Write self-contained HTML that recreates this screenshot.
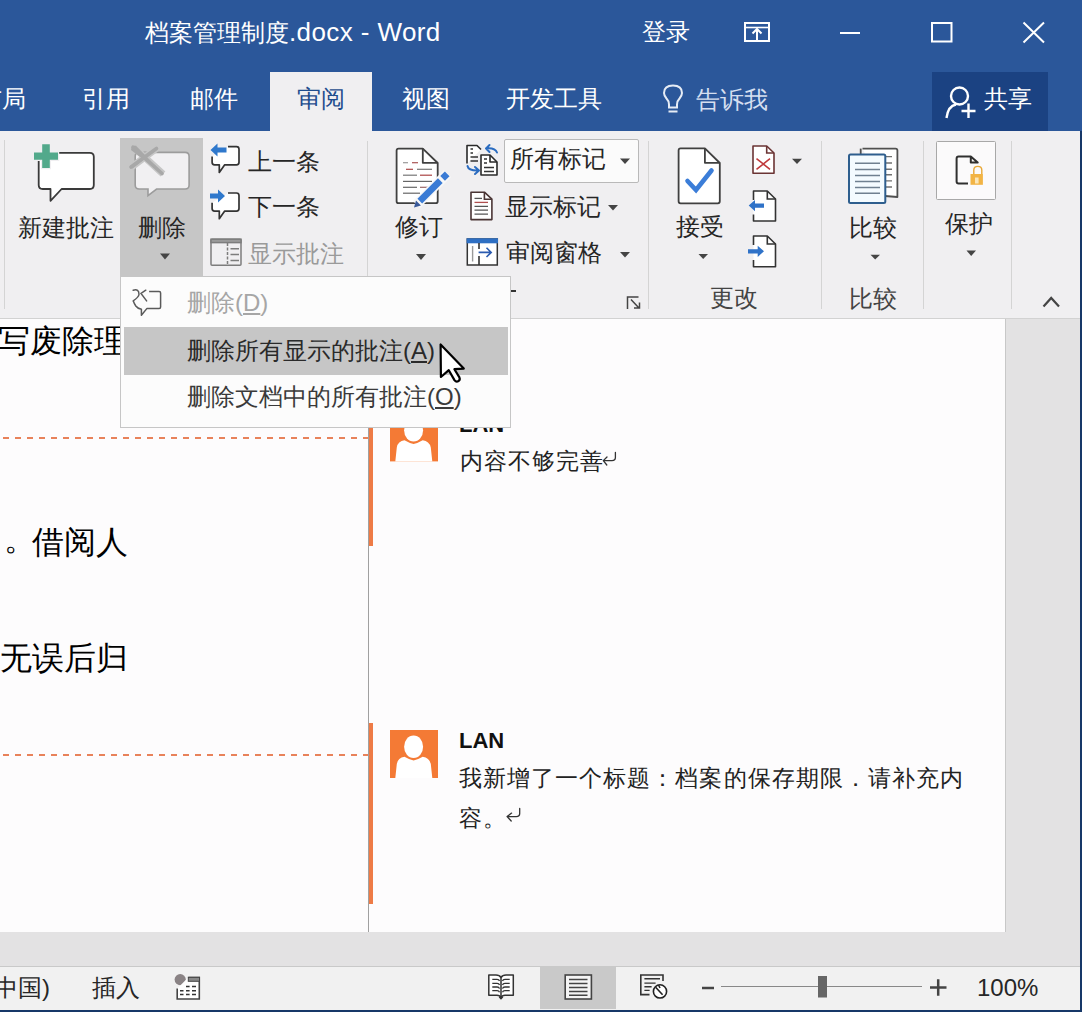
<!DOCTYPE html>
<html><head><meta charset="utf-8">
<style>
*{margin:0;padding:0;box-sizing:border-box}
html,body{width:1082px;height:1012px;overflow:hidden;background:#fdfcfd}
body{position:relative;font-family:"Liberation Sans",sans-serif;color:#262626;font-weight:500}
.a{position:absolute}
.t{position:absolute;white-space:nowrap;line-height:1}
.w{color:#fff}
svg{position:absolute;overflow:visible}
.k{display:inline-block;width:1em;text-align:center;font-style:normal}
#c1 .k,#c3 .k{width:24.1px}
#c2 .k{width:24.05px}
</style></head><body>

<!-- title + tabs -->
<div class="a" style="left:0;top:0;width:1082px;height:131px;background:#2b579a"></div>
<div class="t w" id="title" style="left:145px;top:19px;font-size:24px"><i class="k">档</i><i class="k">案</i><i class="k">管</i><i class="k">理</i><i class="k">制</i><i class="k">度</i><span style="font-size:26px;letter-spacing:0.4px">.docx - Word</span></div>
<div class="t w" id="login" style="left:642px;top:20px;font-size:24px"><i class="k">登</i><i class="k">录</i></div>

<!-- tabs -->
<div class="t w" id="tab0" style="left:-22px;top:87px;font-size:24px"><i class="k">布</i><i class="k">局</i></div>
<div class="t w" id="tab1" style="left:82px;top:87px;font-size:24px"><i class="k">引</i><i class="k">用</i></div>
<div class="t w" id="tab2" style="left:190px;top:87px;font-size:24px"><i class="k">邮</i><i class="k">件</i></div>
<div class="a" style="left:270px;top:72px;width:102px;height:60px;background:#f0eff1"></div>
<div class="t" id="tab3" style="left:297px;top:87px;font-size:24px;color:#1f4d8e"><i class="k">审</i><i class="k">阅</i></div>
<div class="t w" id="tab4" style="left:402px;top:87px;font-size:24px"><i class="k">视</i><i class="k">图</i></div>
<div class="t w" id="tab5" style="left:506px;top:87px;font-size:24px"><i class="k">开</i><i class="k">发</i><i class="k">工</i><i class="k">具</i></div>
<div class="t" id="tab6" style="left:696px;top:88px;font-size:24px;color:#d5dff0"><i class="k">告</i><i class="k">诉</i><i class="k">我</i></div>
<div class="a" style="left:932px;top:72px;width:116px;height:59px;background:#1b4282"></div>
<div class="t w" id="share" style="left:984px;top:87px;font-size:24px"><i class="k">共</i><i class="k">享</i></div>


<svg style="left:0;top:0" width="1082" height="131">
 <g fill="none" stroke="#fff" stroke-width="2">
  <rect x="745" y="23" width="24" height="18"/>
  <line x1="745" y1="27.5" x2="769" y2="27.5" stroke-width="1.6"/>
  <path d="M757 40V29M752.5 33.5L757 29L761.5 33.5"/>
  <line x1="840" y1="33" x2="860" y2="33"/>
  <rect x="932" y="23" width="19.5" height="18.5"/>
  <path d="M1023.5 22.5L1044 42.5M1044 22.5L1023.5 42.5"/>
 </g>
 <g fill="none" stroke="#e6ecf5" stroke-width="2">
  <path d="M669 107.5V104.5Q669 101 666.5 98.5Q664 95.5 664 93Q664 85.5 673 85.5Q682 85.5 682 93Q682 95.5 679.5 98.5Q677 101 677 104.5V107.5Z"/>
  <line x1="668.5" y1="111.5" x2="677.5" y2="111.5"/>
 </g>
 <g fill="none" stroke="#fff" stroke-width="2.4">
  <circle cx="959.5" cy="96" r="8.5"/>
  <path d="M946.5 118Q948 106 956 104.5"/>
  <path d="M968.5 103.5V118M961.5 111H975.5"/>
 </g>
</svg>

<!-- ribbon -->
<div class="a" style="left:0;top:131px;width:1082px;height:188px;background:#f0eff1;border-bottom:1px solid #d2d2d2"></div>
<div class="a" style="left:120px;top:138px;width:83px;height:139px;background:#c6c6c6"></div>
<div class="t" id="r_new" style="left:18px;top:215.5px;font-size:24px"><i class="k">新</i><i class="k">建</i><i class="k">批</i><i class="k">注</i></div>
<div class="t" id="r_del" style="left:138px;top:215.5px;font-size:24px"><i class="k">删</i><i class="k">除</i></div>
<div class="t" id="r_prev" style="left:248px;top:150px;font-size:24px"><i class="k">上</i><i class="k">一</i><i class="k">条</i></div>
<div class="t" id="r_next" style="left:248px;top:195px;font-size:24px"><i class="k">下</i><i class="k">一</i><i class="k">条</i></div>
<div class="t" id="r_show" style="left:248px;top:241.5px;font-size:24px;color:#9a9a9a"><i class="k">显</i><i class="k">示</i><i class="k">批</i><i class="k">注</i></div>
<div class="t" id="r_rev" style="left:395px;top:215px;font-size:24px"><i class="k">修</i><i class="k">订</i></div>
<div class="a" style="left:504px;top:139px;width:135px;height:44px;background:#fbfbfb;border:1px solid #b9b9b9;border-radius:2px"></div>
<div class="t" id="r_all" style="left:510px;top:146.5px;font-size:24px"><i class="k">所</i><i class="k">有</i><i class="k">标</i><i class="k">记</i></div>
<div class="t" id="r_showm" style="left:505px;top:194.5px;font-size:24px"><i class="k">显</i><i class="k">示</i><i class="k">标</i><i class="k">记</i></div>
<div class="t" id="r_pane" style="left:506px;top:241px;font-size:24px"><i class="k">审</i><i class="k">阅</i><i class="k">窗</i><i class="k">格</i></div>
<div class="t" id="r_acc" style="left:676px;top:215px;font-size:24px"><i class="k">接</i><i class="k">受</i></div>
<div class="t" id="r_chg" style="left:710px;top:286px;font-size:24px;color:#444"><i class="k">更</i><i class="k">改</i></div>
<div class="t" id="r_cmp" style="left:849px;top:215.5px;font-size:24px"><i class="k">比</i><i class="k">较</i></div>
<div class="t" id="r_cmpl" style="left:849px;top:287px;font-size:24px;color:#444"><i class="k">比</i><i class="k">较</i></div>
<div class="a" style="left:936px;top:141px;width:60px;height:59px;background:#fbfafb;border:1px solid #a8a8a8;border-radius:1.5px"></div>
<div class="t" id="r_prot" style="left:945px;top:212px;font-size:24px"><i class="k">保</i><i class="k">护</i></div>


<svg style="left:0;top:0" width="1082" height="320">
 <!-- new comment -->
 <path d="M42.7 152.8H89.8Q93.8 152.8 93.8 156.8V185Q93.8 189 89.8 189H61.6L50.5 200.8V189H42.7Q38.7 189 38.7 185V156.8Q38.7 152.8 42.7 152.8Z" fill="#fff" stroke="#3a3a3a" stroke-width="1.8" stroke-linejoin="round"/>
 <path d="M42.2 144.3H49.8V152.4H58V159.8H49.8V168H42.2V159.8H34V152.4H42.2Z" fill="#52a98b" stroke="#f0eff1" stroke-width="2.4" paint-order="stroke"/>
 <!-- delete -->
 <path d="M139.2 152.4H185.1Q189.1 152.4 189.1 156.4V185Q189.1 189 185.1 189H156.6L148 195.7V189H139.2Q135.2 189 135.2 185V156.4Q135.2 152.4 139.2 152.4Z" fill="#f1f0f2" stroke="#9c9c9c" stroke-width="1.6"/>
 <path d="M133 146.5L163 174M157 148L131 167.5" stroke="#c6c6c6" stroke-width="7" fill="none"/>
 <path d="M132 145.5L136 145.8L164 174.5L160.5 172.5L131 150Z" fill="#a8a8a8"/>
 <path d="M157.5 147.5L155 151L132.5 168.5L130 168Q129.5 166.5 131 165.5Z" fill="#a8a8a8"/>
 <path d="M133 147.5L162 173.5M156.5 148.5L131 167" stroke="#a8a8a8" stroke-width="3.6" fill="none" stroke-linecap="round"/>
 <!-- prev / next comment -->
 <g fill="#fff" stroke="#333" stroke-width="1.7" stroke-linejoin="round">
  <path d="M228 146.7H236.5Q239 146.7 239 149.2V162.3Q239 164.8 236.5 164.8H224.7L219.3 172.4V164.8H214.6Q212.1 164.8 212.1 162.3V156.4"/>
  <path d="M228 193H236.5Q239 193 239 195.5V208.6Q239 211.1 236.5 211.1H224.7L219.3 218.7V211.1H214.6Q212.1 211.1 212.1 208.6V202.7"/>
 </g>
 <g fill="#2f78cc">
  <path d="M210.5 150L217.5 143.6V147.5H226.5V152.5H217.5V156.4Z"/>
  <path d="M225 196L218 189.6V193.5H210V198.5H218V202.4Z"/>
 </g>
 <!-- show comments -->
 <g fill="none" stroke="#7d7d7d" stroke-width="1.5">
  <rect x="211" y="239.2" width="30" height="26" rx="1"/>
  <rect x="211" y="239.2" width="30" height="3.4" fill="#9a9a9a"/>
  <line x1="227.5" y1="243" x2="227.5" y2="265" stroke-dasharray="3 1.5"/>
  <path d="M230.5 248.8H239M230.5 254.5H239M230.5 260.5H239" stroke-width="1.4"/>
 </g>
 <!-- track changes -->
 <path d="M398.6 148.6H422.8L437.7 163V201.2Q437.7 203.2 435.7 203.2H398.6Q396.6 203.2 396.6 201.2V150.6Q396.6 148.6 398.6 148.6Z" fill="#fff" stroke="#404040" stroke-width="1.8" stroke-linejoin="round"/>
 <path d="M422.8 148.6V162.8H437.7" fill="none" stroke="#404040" stroke-width="1.8" stroke-linejoin="round"/>
 <g stroke-width="1.2">
  <path d="M403 162.7H408" stroke="#999"/><path d="M412 162.7H418" stroke="#a55"/>
  <path d="M406 169.3H413" stroke="#a44"/><path d="M417 169.3H432" stroke="#777"/>
  <path d="M403 175.2H417" stroke="#777"/><path d="M420 175.2H432" stroke="#a44"/>
  <path d="M403 181.4H432" stroke="#666"/>
  <path d="M403 187.3H417" stroke="#666"/><path d="M420 187.3H428" stroke="#966"/>
  <path d="M403 193.2H420" stroke="#666"/>
 </g>
 <path d="M416.5 204.5L447.5 173.5" stroke="#f8f8f8" stroke-width="10"/>
 <path d="M419.8 201.2L440.3 180.7" stroke="#3a7bd5" stroke-width="6.6"/>
 <path d="M442.6 178.4L447.2 173.8" stroke="#3a7bd5" stroke-width="6.6"/>
 <path d="M414 207.5L416 200.6L420.9 205.5Z" fill="#3a5a9a"/>
 <!-- tracking icon -->
 <g fill="#fff" stroke="#2a2a2a" stroke-width="1.6" stroke-linejoin="round">
  <path d="M467 163.5V145.5H477L481 149.5"/>
  <path d="M481 175V155H490L497 162V175Z"/>
  <path d="M490 155V162H497" fill="none"/>
 </g>
 <g stroke="#333" stroke-width="1.3"><path d="M470.5 149H473M470.5 153H473M470.5 157H478M470.5 161H478M484 159H487M484 163H487M484 167.5H494M484 171.5H494"/></g>
 <g fill="none" stroke="#2b6cc0" stroke-width="2" stroke-linecap="round" stroke-linejoin="round">
  <path d="M497 152.5Q495 147.5 486 148.5M489.5 145L486 148.5L489.5 152"/>
  <path d="M467.5 166Q468.5 171 479 170.5M475 167L479 170.5L475 174"/>
 </g>
 <!-- show markup -->
 <path d="M471 192.2H484.4L491.9 199.2V219.6H471Z" fill="#fff" stroke="#4a3535" stroke-width="1.6" stroke-linejoin="round"/>
 <path d="M484.4 192.2V199.2H491.9" fill="none" stroke="#4a3535" stroke-width="1.6"/>
 <g stroke-width="1.3"><path d="M474.5 198.4H482" stroke="#555"/><path d="M474.5 202.4H488" stroke="#b05050"/><path d="M474.5 206.3H488M474.5 210.2H488M474.5 214.2H488" stroke="#555"/></g>
 <!-- review pane -->
 <rect x="467.3" y="239" width="30" height="26" fill="#fff" stroke="#333" stroke-width="1.5"/>
 <rect x="466.6" y="238.3" width="31.4" height="5" fill="#2e6fc3"/>
 <path d="M479 243V249M479 256V265" stroke="#333" stroke-width="1.6"/>
 <path d="M472.6 246V261.5" stroke="#999" stroke-width="1.4"/>
 <path d="M478.6 252.4H491M486.5 247.8L491.2 252.4L486.5 257" fill="none" stroke="#2b5bb0" stroke-width="1.6"/>
 <!-- accept -->
 <path d="M680.6 148.3H704.9L719.8 163V201.3Q719.8 203.3 717.8 203.3H680.6Q678.6 203.3 678.6 201.3V150.3Q678.6 148.3 680.6 148.3Z" fill="#fff" stroke="#404040" stroke-width="1.8" stroke-linejoin="round"/>
 <path d="M704.9 148.3V162.8H719.8" fill="none" stroke="#404040" stroke-width="1.8" stroke-linejoin="round"/>
 <path d="M687.5 181L696 190L711.5 170.5" fill="none" stroke="#3b7dd8" stroke-width="4.6" stroke-linecap="round" stroke-linejoin="miter"/>
 <!-- reject -->
 <path d="M753 146H766.7L774 153V173.3H753Z" fill="#fff" stroke="#6b3434" stroke-width="1.6" stroke-linejoin="round"/>
 <path d="M766.7 146V153H774" fill="none" stroke="#6b3434" stroke-width="1.6"/>
 <path d="M756.5 158.7L770 169.3M770 158.7L756.5 169.3" stroke="#c0393b" stroke-width="1.6"/>
 <!-- prev/next change -->
 <g fill="#fff" stroke="#333" stroke-width="1.6" stroke-linejoin="round">
  <path d="M753.5 200V191H767.3L775.5 199V221H753.5V214.5"/>
  <path d="M753.5 245V236H767.3L775.5 244V266.8H753.5V260"/>
 </g>
 <g fill="none" stroke="#333" stroke-width="1.6"><path d="M767.3 191V199H775.5M767.3 236V244H775.5"/></g>
 <g fill="#2f72c8">
  <path d="M748.7 205.6L755 200V203.5H764V207.7H755V211.2Z"/>
  <path d="M764 251.3L757.7 245.7V249.2H748V253.4H757.7V256.9Z"/>
 </g>
 <!-- compare -->
 <path d="M862.5 148.6H895.5Q897.4 148.6 897.4 150.5V197L885 196" fill="#fff" stroke="#505050" stroke-width="1.8" stroke-linejoin="round"/>
 <path d="M860.7 154V148.6" stroke="#505050" stroke-width="1.8"/>
 <path d="M886 156.6H892M886 163H892M886 169.2H892M886 174.8H892M886 180.9H892M886 187H892" stroke="#707070" stroke-width="1.4"/>
 <rect x="849" y="154.5" width="36.3" height="48.4" rx="1.5" fill="#f4fbff" stroke="#2e5e8e" stroke-width="2"/>
 <path d="M855 163.2H880M855 169.4H880M855 175.4H880M855 181.4H880M855 187.4H880M855 193.2H880" stroke="#6f8090" stroke-width="1.5"/>
 <!-- protect -->
 <path d="M968 183.4H958.6Q956.6 183.4 956.6 181.4V158.4Q956.6 156.4 958.6 156.4H970.8L977.7 162.6H970.8V156.4" fill="none" stroke="#303030" stroke-width="2" stroke-linejoin="round"/>
 <path d="M973.8 174V170Q973.8 166.4 977.8 166.4Q981.8 166.4 981.8 170V174" fill="none" stroke="#e8a838" stroke-width="1.4"/>
 <rect x="970.5" y="174" width="12.4" height="10.8" fill="#f2b445"/>
 <rect x="975" y="177.5" width="3.6" height="6" fill="#fbe6b8"/>
 <!-- dropdown arrows -->
 <g fill="#444">
  <path d="M160 253.5H170L165 259.5Z"/>
  <path d="M416 254H426L421 260Z"/>
  <path d="M620 158.5H630L625 164Z"/>
  <path d="M608 205H618L613 210.5Z"/>
  <path d="M620 252H630L625 257.5Z"/>
  <path d="M698.5 254H708L703.2 259Z"/>
  <path d="M792 158.7H802L797 164Z"/>
  <path d="M870.5 254.7H880L875.2 259.5Z"/>
  <path d="M966.5 250.6H976L971.2 256Z"/>
 </g>
 <!-- dialog launcher -->
 <path d="M627.5 309V297H638.5M631 299.5L638.5 307.5M634 308H639.5V302.5" fill="none" stroke="#444" stroke-width="1.5"/>
 <!-- collapse -->
 <path d="M1043.5 306.5L1051.2 298L1059 306.5" fill="none" stroke="#444" stroke-width="2.2"/>
</svg>

<!-- separators -->
<div class="a" style="left:4px;top:140px;width:1px;height:169px;background:#d4d4d4"></div>
<div class="a" style="left:367px;top:141px;width:1px;height:168px;background:#d4d4d4"></div>
<div class="a" style="left:648px;top:141px;width:1px;height:168px;background:#d4d4d4"></div>
<div class="a" style="left:821px;top:141px;width:1px;height:168px;background:#d4d4d4"></div>
<div class="a" style="left:923px;top:141px;width:1px;height:168px;background:#d4d4d4"></div>
<div class="a" style="left:1011px;top:141px;width:1px;height:168px;background:#d4d4d4"></div>

<!-- document -->
<div class="a" style="left:0;top:319px;width:1082px;height:648px;background:#e3e2e3"></div>
<div class="a" style="left:0;top:319px;width:1006px;height:613px;background:#fdfcfd;border-right:1px solid #c8c8c8"></div>
<div class="a" style="left:368px;top:319px;width:1px;height:613px;background:#a0a0a0"></div>
<div class="t" id="d1" style="font-weight:300;left:-2px;top:325px;font-size:32px;color:#000"><i class="k">写</i><i class="k">废</i><i class="k">除</i><i class="k">理</i></div>
<div class="t" id="d2p" style="font-weight:300;left:4px;top:522.5px;font-size:32px;color:#000"><i class="k">。</i></div><div class="t" id="d2" style="font-weight:300;left:32px;top:525.5px;font-size:32px;color:#000"><i class="k">借</i><i class="k">阅</i><i class="k">人</i></div>
<div class="t" id="d3" style="font-weight:300;left:0px;top:642px;font-size:32px;color:#000"><i class="k">无</i><i class="k">误</i><i class="k">后</i><i class="k">归</i></div>
<div class="a" style="left:0;top:437px;width:368px;height:2px;background:repeating-linear-gradient(90deg,transparent 0 3px,#e8825a 3px 9px,transparent 9px 12px)"></div>
<div class="a" style="left:0;top:754px;width:368px;height:2px;background:repeating-linear-gradient(90deg,transparent 0 3px,#e8825a 3px 9px,transparent 9px 12px)"></div>
<div class="a" style="left:369px;top:406px;width:4px;height:140px;background:#ee7b46"></div>
<div class="a" style="left:369px;top:723px;width:4px;height:181px;background:#ee7b46"></div>
<div class="a" style="left:390px;top:413px;width:48px;height:48px;background:#f47b3b"></div>
<div class="a" style="left:390px;top:730px;width:48px;height:48px;background:#f47b3b"></div>
<div class="t" id="lan1" style="left:459px;top:413.5px;font-size:22px;font-weight:bold;color:#111">LAN</div>
<div class="t" id="c1" style="font-weight:400;letter-spacing:1.1px;left:460px;top:449.5px;font-size:22.7px;color:#222"><i class="k">内</i><i class="k">容</i><i class="k">不</i><i class="k">够</i><i class="k">完</i><i class="k">善</i></div>
<div class="t" id="lan2" style="left:459px;top:729.5px;font-size:22px;font-weight:bold;color:#111">LAN</div>
<div class="t" id="c2" style="font-weight:400;left:459px;top:766.5px;font-size:22.7px;color:#222;letter-spacing:1.05px"><i class="k">我</i><i class="k">新</i><i class="k">增</i><i class="k">了</i><i class="k">一</i><i class="k">个</i><i class="k">标</i><i class="k">题</i><i class="k">：</i><i class="k">档</i><i class="k">案</i><i class="k">的</i><i class="k">保</i><i class="k">存</i><i class="k">期</i><i class="k">限</i><i class="k">．</i><i class="k">请</i><i class="k">补</i><i class="k">充</i><i class="k">内</i></div>
<div class="t" id="c3" style="font-weight:400;letter-spacing:1.1px;left:459px;top:807px;font-size:22.7px;color:#222"><i class="k">容</i><i class="k">。</i></div>


<svg style="left:0;top:0" width="1082" height="1012">
 <g>
  <rect x="390" y="730" width="48" height="48" fill="#f47a35"/>
  <ellipse cx="413.6" cy="746.8" rx="9.5" ry="11.3" fill="#fff"/>
  <path d="M395.3 778L396.8 764Q398 757.5 404.5 756.8Q409 759.5 413.6 760.5Q418.2 759.5 422.7 756.8Q429.2 757.5 430.8 764L432.3 778Z" fill="#fff"/>
 </g>
 <g transform="translate(0,-316.6)">
  <rect x="390" y="730" width="48" height="48" fill="#f47a35"/>
  <ellipse cx="413.6" cy="746.8" rx="9.5" ry="11.3" fill="#fff"/>
  <path d="M395.3 778L396.8 764Q398 757.5 404.5 756.8Q409 759.5 413.6 760.5Q418.2 759.5 422.7 756.8Q429.2 757.5 430.8 764L432.3 778Z" fill="#fff"/>
 </g>
</svg>


<svg style="left:0;top:0" width="1082" height="1012">
 <g fill="none" stroke="#333" stroke-width="1.3" stroke-linecap="round" stroke-linejoin="round">
  <path d="M615.4 452.5V457.5Q615.4 460.6 612 460.6H603.5M607 457L603.3 460.6L606.8 465"/>
  <path d="M519.7 808.5V813.5Q519.7 816.6 516.3 816.6H507.3M511.6 813.1L507.1 816.6L511.2 821"/>
 </g>
</svg>

<!-- status bar -->
<div class="a" style="left:0;top:966px;width:1082px;height:46px;background:#f1f1f1;border-top:1px solid #c9c9c9"></div>
<div class="a" style="left:540px;top:967px;width:76px;height:42px;background:#c9c9c9"></div>
<div class="t" id="s1" style="left:-14px;top:976px;font-size:24px">(<i class="k">中</i><i class="k">国</i>)</div>
<div class="t" id="s2" style="left:92px;top:976px;font-size:24px"><i class="k">插</i><i class="k">入</i></div>
<div class="t" id="s3" style="left:977px;top:976px;font-size:24px">100%</div>


<svg style="left:0;top:0" width="1082" height="1012">
 <circle cx="180.2" cy="979.6" r="5.6" fill="#8a8385"/>
 <path d="M188.3 977.5H199.3V999H177.2V988.4" fill="#fff" stroke="#444" stroke-width="1.6"/>
 <rect x="188.3" y="977.3" width="11.2" height="4" fill="#888" stroke="#444" stroke-width="1"/>
 <path d="M186 986.5H189.6M192 986.5H196M180 990.7H183.5M186 990.7H189.6M192 990.7H196M180 994.4H183.5M186 994.4H189.6M192 994.4H196" stroke="#333" stroke-width="1.5"/>
 <!-- read mode -->
 <g fill="none" stroke="#333" stroke-width="1.5" stroke-linejoin="round">
  <path d="M488.8 975H496Q499.5 975 501 977.5Q502.5 975 506 975H513.3V995.2H505Q502 995.2 501 997.5Q500 995.2 497 995.2H488.8Z" fill="#fff"/>
  <path d="M501 977.5V998.5M499.3 996.8L501 998.8L502.7 996.8"/>
  <path d="M492.3 979.3H497Q499 979.3 499.5 981M492.3 983.4H497Q499 983.4 499.5 985M492.3 987H497Q499 987 499.5 988.6M492.3 990.6H497Q499 990.6 499.5 992.2M509.7 979.3H505Q503 979.3 502.5 981M509.7 983.4H505Q503 983.4 502.5 985M509.7 987H505Q503 987 502.5 988.6M509.7 990.6H505Q503 990.6 502.5 992.2" stroke-width="1.3"/>
 </g>
 <!-- print layout -->
 <rect x="565.2" y="975" width="26.2" height="24" fill="#f4f4f4" stroke="#444" stroke-width="1.6"/>
 <path d="M569 979.5H587.5M569 983.5H587.5M569 987.5H587.5M569 991.5H587.5M569 995.3H587.5" stroke="#444" stroke-width="1.6"/>
 <!-- web layout -->
 <path d="M649.5 994.6H640.8V975H663V981" fill="none" stroke="#333" stroke-width="1.6"/>
 <path d="M644.4 978.8H660M644.4 983.1H655.6M644.4 986.7H651.6M644.4 990.4H649.6" stroke="#333" stroke-width="1.4"/>
 <circle cx="660" cy="991.4" r="6.6" fill="#fff" stroke="#222" stroke-width="1.6"/>
 <path d="M655.6 987.2L662.6 994.8M658.5 985L660 988" stroke="#222" stroke-width="1.6"/>
 <!-- zoom -->
 <path d="M702 988H714" stroke="#444" stroke-width="2.5"/>
 <path d="M721 986.5H922" stroke="#888" stroke-width="1.2"/>
 <rect x="818" y="976" width="9" height="21.5" fill="#666"/>
 <path d="M930 987.5H946.5M938.2 979.3V995.7" stroke="#444" stroke-width="2.5"/>
</svg>

<!-- window border -->
<div class="a" style="left:1079.5px;top:131px;width:2.5px;height:881px;background:#173868"></div>
<div class="a" style="left:0;top:1009.5px;width:1082px;height:2.5px;background:#173868"></div>

<!-- menu -->
<div class="a" style="left:511px;top:290px;width:5px;height:2px;background:#333"></div>
<div class="a" style="left:120px;top:276px;width:391px;height:152px;background:#fcfcfc;border:1px solid #c6c6c6"></div>
<div class="a" style="left:124px;top:327px;width:384px;height:48px;background:#c6c6c6"></div>
<div class="t" id="m1" style="font-weight:400;left:187px;top:291px;font-size:24px;color:#a6a6a6"><i class="k">删</i><i class="k">除</i>(<u>D</u>)</div>
<div class="t" id="m2" style="font-weight:400;left:187px;top:338.5px;font-size:24px;color:#2a2a2a"><i class="k">删</i><i class="k">除</i><i class="k">所</i><i class="k">有</i><i class="k">显</i><i class="k">示</i><i class="k">的</i><i class="k">批</i><i class="k">注</i>(<u>A</u>)</div>
<div class="t" id="m3" style="font-weight:400;left:187px;top:385px;font-size:24px;color:#3a3a3a"><i class="k">删</i><i class="k">除</i><i class="k">文</i><i class="k">档</i><i class="k">中</i><i class="k">的</i><i class="k">所</i><i class="k">有</i><i class="k">批</i><i class="k">注</i>(<u>O</u>)</div>


<svg style="left:0;top:0" width="1082" height="1012">
 <path d="M149.1 291.4H159.1Q160.6 291.4 160.6 292.9V306.9Q160.6 308.4 159.1 308.4H147L141.4 315.3V309.2Q137.5 308.5 135.8 306Q134.2 303.5 133.3 300.9" fill="none" stroke="#5a5a5a" stroke-width="1.5" stroke-linejoin="round"/>
 <path d="M133.2 290.2Q139 288.5 139 294.5Q138.5 297.5 133.2 300.8M145.8 290.2L141 293.5L146.6 300.9" fill="none" stroke="#5a5a5a" stroke-width="1.5" stroke-linecap="round"/>
 <path d="M440.6 344.5L440.9 377L448.8 370.2L454.6 380.4Q456.2 382.3 458.6 381Q460.4 379.6 459.4 377.4L454.4 369.2L463.8 368.6Z" fill="#fff" stroke="#000" stroke-width="2.2" stroke-linejoin="round"/>
</svg>

</body></html>
